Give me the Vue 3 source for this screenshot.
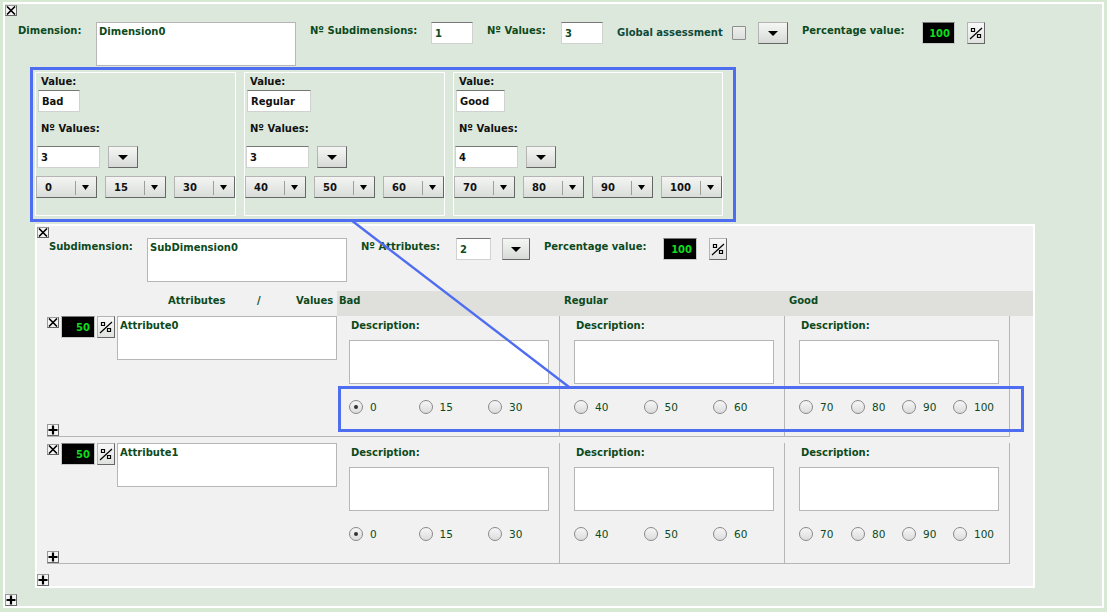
<script setup>
const values = [
  { name: 'Bad', count: 3, nameWidth: 'w42', options: [0, 15, 30] },
  { name: 'Regular', count: 3, nameWidth: 'w64', options: [40, 50, 60] },
  { name: 'Good', count: 4, nameWidth: 'w49', options: [70, 80, 90, 100] }
]

const attributes = ['Attribute0', 'Attribute1']
</script>

<template>
  <div class="page">
    <div class="dimension">
      <button class="mini">
        <svg width="10" height="9" viewBox="0 0 10 9"><path d="M1 0.5 9 8.5M9 0.5 1 8.5" /></svg>
      </button>

      <div class="dim-head">
        <span class="label w78">Dimension:</span>
        <div class="area w200">Dimension0</div>
        <span class="label w121 ml14">Nº Subdimensions:</span>
        <div class="field w42">1</div>
        <span class="label w74 ml14">Nº Values:</span>
        <div class="field w42">3</div>
        <span class="label w115 ml14 lower teal">Global assessment</span>
        <span class="check"></span>
        <button class="drop ml12">
          <svg width="10" height="5" viewBox="0 0 10 5"><path d="M0 0H10L5 5Z" /></svg>
        </button>
        <span class="label w120 ml14">Percentage value:</span>
        <div class="percent w33">100</div>
        <button class="pct ml12">
          <svg width="14" height="14" viewBox="0 0 14 14"><path d="M1 13 13 2M2.5 2.5h3v3h-3zM8.5 8.5h3v3h-3z" /></svg>
        </button>
      </div>

      <div class="value-panels">
        <div v-for="v in values" :key="v.name" class="value-panel">
          <div class="vp-label">Value:</div>
          <div class="field name-field" :class="v.nameWidth">{{ v.name }}</div>
          <div class="vp-label count-label">Nº Values:</div>
          <div class="count-row">
            <div class="field count-field">{{ v.count }}</div>
            <button class="drop">
              <svg width="10" height="5" viewBox="0 0 10 5"><path d="M0 0H10L5 5Z" /></svg>
            </button>
          </div>
          <div class="selects">
            <div v-for="o in v.options" :key="o" class="select">
              <span class="select-text">{{ o }}</span>
              <span class="select-arrow">
                <svg width="7" height="5" viewBox="0 0 7 5"><path d="M0 0H7L3.5 5Z" /></svg>
              </span>
            </div>
          </div>
        </div>
      </div>

      <div class="subdimension">
        <button class="mini">
          <svg width="10" height="9" viewBox="0 0 10 9"><path d="M1 0.5 9 8.5M9 0.5 1 8.5" /></svg>
        </button>

        <div class="sub-head">
          <span class="label w98">Subdimension:</span>
          <div class="area w200">SubDimension0</div>
          <span class="label w95 ml14">Nº Attributes:</span>
          <div class="field w35">2</div>
          <button class="drop sub-drop">
            <svg width="10" height="5" viewBox="0 0 10 5"><path d="M0 0H10L5 5Z" /></svg>
          </button>
          <span class="label w119 ml14">Percentage value:</span>
          <div class="percent w34">100</div>
          <button class="pct ml12">
            <svg width="14" height="14" viewBox="0 0 14 14"><path d="M1 13 13 2M2.5 2.5h3v3h-3zM8.5 8.5h3v3h-3z" /></svg>
          </button>
        </div>

        <div class="table-head">
          <div class="axis">
            <span class="axis-attr">Attributes</span>
            <span class="axis-slash">/</span>
            <span class="axis-val">Values</span>
          </div>
          <div class="head-names">
            <span v-for="v in values" :key="v.name" class="head-name">{{ v.name }}</span>
          </div>
        </div>

        <div v-for="a in attributes" :key="a" class="attribute">
          <div class="attr-left">
            <div class="attr-top">
              <button class="mini mini-row">
                <svg width="10" height="9" viewBox="0 0 10 9"><path d="M1 0.5 9 8.5M9 0.5 1 8.5" /></svg>
              </button>
              <div class="percent w34 attr-pct">50</div>
              <button class="pct attr-pct">
                <svg width="14" height="14" viewBox="0 0 14 14"><path d="M1 13 13 2M2.5 2.5h3v3h-3zM8.5 8.5h3v3h-3z" /></svg>
              </button>
              <div class="area w220">{{ a }}</div>
            </div>
            <button class="mini plus">
              <svg width="10" height="10" viewBox="0 0 10 10"><path d="M5 0.5V9.5M0.5 5H9.5" /></svg>
            </button>
          </div>
          <div v-for="(v, i) in values" :key="v.name" class="cell" :class="{ first: i === 0 }">
            <div class="desc-label">Description:</div>
            <div class="area desc-area"></div>
            <div class="radios" :class="v.options.length === 4 ? 'four' : 'three'">
              <label v-for="(o, j) in v.options" :key="o" class="radio">
                <span class="radio-dot" :class="{ on: i === 0 && j === 0 }"></span>
                <span>{{ o }}</span>
              </label>
            </div>
          </div>
        </div>

        <button class="mini plus sub-plus">
          <svg width="10" height="10" viewBox="0 0 10 10"><path d="M5 0.5V9.5M0.5 5H9.5" /></svg>
        </button>
      </div>

      <button class="mini plus dim-plus">
        <svg width="10" height="10" viewBox="0 0 10 10"><path d="M5 0.5V9.5M0.5 5H9.5" /></svg>
      </button>
    </div>

    <!-- callout drawn over the form -->
    <svg class="callout" width="1107" height="612" viewBox="0 0 1107 612">
      <rect x="31.5" y="68.5" width="703" height="152" />
      <rect x="339.5" y="387.5" width="683" height="43" />
      <path d="M351 220 569 387" />
    </svg>
  </div>
</template>

<style>
html, body {
  background: #d7e9d2;
}
</style>

<style scoped>
.page {
  position: relative;
  width: 1107px;
  height: 612px;
  overflow: hidden;
  font-family: "DejaVu Sans", Verdana, sans-serif;
  font-size: 10px;
  color: #0c4a1c;
}
button {
  padding: 0;
  font: inherit;
  display: flex;
  align-items: center;
  justify-content: center;
  box-sizing: border-box;
}
.dimension {
  box-sizing: border-box;
  width: 1101px;
  height: 606px;
  margin-left: 3px;
  position: relative;
  top: 2px;
  border: 2px solid #fff;
  background: #dde8dc;
}
.mini {
  width: 12px;
  height: 11px;
  margin: 1px 0 0 0;
  background: #f4f4f4;
  border: 1px solid #777;
  border-color: #999 #666 #666 #999;
}
.mini svg {
  fill: none;
  stroke: #000;
  stroke-width: 1.6;
}
.plus {
  height: 12px;
  margin: 0;
}
.plus svg {
  stroke-width: 2.2;
}
.dim-head,
.sub-head {
  display: flex;
  align-items: flex-start;
}
.dim-head {
  margin: 6px 0 0 13px;
  height: 44px;
}
.sub-head {
  margin: 0 0 0 12px;
  height: 44px;
}
.label {
  font-weight: 700;
  line-height: 12px;
  padding-top: 3px;
  white-space: nowrap;
}
.lower {
  padding-top: 5px;
}
.teal {
  color: #0d4a3a;
}
.ml12 { margin-left: 12px; }
.ml14 { margin-left: 14px; }
.w33 { width: 33px; }
.w34 { width: 34px; }
.w35 { width: 35px; }
.w42 { width: 42px; }
.w49 { width: 49px; }
.w64 { width: 64px; }
.w74 { width: 74px; }
.w78 { width: 78px; }
.w95 { width: 95px; }
.w98 { width: 98px; }
.w115 { width: 115px; }
.w119 { width: 119px; }
.w120 { width: 120px; }
.w121 { width: 121px; }
.w200 { width: 200px; }
.w220 { width: 220px; }
.area {
  box-sizing: border-box;
  height: 44px;
  background: #fff;
  border: 1px solid #b6b6b6;
  padding: 3px 2px;
  font-weight: 700;
  line-height: 12px;
}
.field {
  box-sizing: border-box;
  height: 22px;
  background: #fff;
  border: 1px solid #cfd3cf;
  border-top-color: #777;
  padding: 0 3px;
  line-height: 21px;
  font-weight: 700;
}
.percent {
  box-sizing: border-box;
  height: 22px;
  background: #000;
  border: 1px solid #c5c9c5;
  border-top-color: #777;
  color: #0fdc1c;
  font-weight: 700;
  text-align: right;
  padding-right: 4px;
  line-height: 21px;
}
.check {
  box-sizing: border-box;
  width: 14px;
  height: 14px;
  margin-top: 4px;
  background: linear-gradient(#eef0ee, #dcdedc);
  border: 1px solid #8d8d8d;
  border-radius: 1px;
}
.drop {
  width: 30px;
  height: 22px;
  background: linear-gradient(#f6f7f5, #d6dad6);
  border: 1px solid #666;
  border-color: #b4b4b4 #666 #666 #b4b4b4;
}
.drop svg,
.select-arrow svg {
  display: block;
  fill: #000;
}
.pct {
  width: 18px;
  height: 22px;
  background: linear-gradient(#f8f8f8, #e0e2e0);
  border: 1px solid #666;
  border-color: #b4b4b4 #666 #666 #b4b4b4;
}
.pct svg {
  fill: none;
  stroke: #000;
  stroke-width: 1.2;
}
.value-panels {
  display: flex;
  gap: 8px;
  margin: 6px 0 0 30px;
}
.value-panel {
  box-sizing: border-box;
  height: 144px;
  border: 1px solid #fff;
  color: #111;
}
.value-panel:nth-child(1),
.value-panel:nth-child(2) {
  width: 201px;
}
.value-panel:nth-child(3) {
  width: 270px;
}
.vp-label {
  font-weight: 700;
  line-height: 12px;
  margin: 3px 0 0 5px;
}
.name-field {
  color: #111;
  margin: 2px 0 0 2px;
}
.count-label {
  margin-top: 11px;
}
.count-row {
  display: flex;
  gap: 8px;
  margin: 11px 0 0 1px;
}
.count-field {
  width: 63px;
  color: #111;
}
.selects {
  display: flex;
  gap: 8px;
  margin-top: 8px;
}
.select {
  box-sizing: border-box;
  display: flex;
  align-items: center;
  width: 61px;
  height: 22px;
  padding-top: 1px;
  background: linear-gradient(#f4f5f3, #d9ddd9);
  border: 1px solid #666;
  border-color: #b4b4b4 #666 #666 #b4b4b4;
  font-weight: 700;
  color: #111;
}
.select-text {
  width: 38px;
  padding-left: 8px;
  box-sizing: border-box;
}
.select-arrow {
  height: 14px;
  flex: 1;
  display: flex;
  align-items: center;
  padding-left: 6px;
  border-left: 1px solid #9b9f9b;
}
.subdimension {
  box-sizing: border-box;
  width: 1000px;
  height: 364px;
  margin: 8px 0 0 30px;
  border: 2px solid #fff;
  background: #f1f1f1;
  position: relative;
}
.sub-drop {
  width: 28px;
  margin-left: 11px;
}
.table-head {
  display: flex;
  height: 25px;
  margin-top: 9px;
  font-weight: 700;
  line-height: 17px;
}
.axis {
  width: 300px;
  position: relative;
}
.axis span {
  position: absolute;
  top: 1px;
}
.axis-attr { left: 131px; }
.axis-slash { left: 220px; }
.axis-val { left: 259px; }
.head-names {
  flex: 1;
  display: flex;
  background: #dfe0dc;
  padding-left: 2px;
}
.head-name {
  width: 225px;
  padding-top: 1px;
}
.attribute {
  box-sizing: border-box;
  display: flex;
  width: 963px;
  height: 121px;
  margin: 0 0 6px 10px;
  border-bottom: 1px solid #b6b6b6;
}
.attr-left {
  width: 290px;
  display: flex;
  flex-direction: column;
  justify-content: space-between;
}
.attr-top {
  display: flex;
  align-items: flex-start;
}
.mini-row {
  flex: none;
  margin-right: 2px;
}
.attr-pct {
  margin-right: 2px;
}
.cell {
  box-sizing: border-box;
  width: 225px;
  padding-left: 14px;
  border-right: 1px solid #b6b6b6;
}
.cell.first {
  width: 223px;
  padding-left: 12px;
}
.desc-label {
  font-weight: 700;
  line-height: 12px;
  margin: 4px 0 0 2px;
}
.desc-area {
  width: 200px;
  margin-top: 8px;
}
.radios {
  display: grid;
  margin-top: 16px;
}
.three {
  grid-template-columns: repeat(3, 69.5px);
}
.four {
  grid-template-columns: 52px 51px 51px 51px;
}
.radio {
  display: flex;
  align-items: center;
  gap: 7px;
  height: 14px;
  font-size: 10.5px;
}
.radio-dot {
  box-sizing: border-box;
  flex: none;
  width: 14px;
  height: 14px;
  border-radius: 50%;
  border: 1px solid #8a8a8a;
  background: linear-gradient(#f6f6f6, #dcdcdc);
  display: flex;
  align-items: center;
  justify-content: center;
}
.radio-dot.on::after {
  content: "";
  width: 4px;
  height: 4px;
  border-radius: 50%;
  background: #333;
}
.sub-plus {
  margin: 10px 0 0 0;
}
.dim-plus {
  position: absolute;
  left: 0;
  bottom: 0;
}
.callout {
  position: absolute;
  left: 0;
  top: 0;
  pointer-events: none;
  fill: none;
  stroke: #4f6df0;
  stroke-width: 3;
}
.callout path {
  stroke-width: 2.4;
}
</style>
